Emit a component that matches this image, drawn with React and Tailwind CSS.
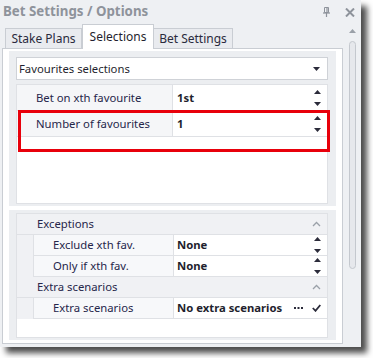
import React from 'react';

const font = { fontFamily: '"Noto Sans", "Open Sans", sans-serif' };

const Spin = () => (
  <div className="flex flex-col items-center justify-between h-[16px] w-[8px]">
    <svg width="7" height="4" viewBox="0 0 7 4"><path d="M0 4 L3.5 0 L7 4 Z" fill="#2b2b3a" /></svg>
    <svg width="7" height="4" viewBox="0 0 7 4"><path d="M0 0 L3.5 4 L7 0 Z" fill="#2b2b3a" /></svg>
  </div>
);

const Caret = () => (
  <svg width="9" height="6" viewBox="0 0 9 6">
    <path d="M1 5 L4.5 1.5 L8 5" fill="none" stroke="#9aa0a8" strokeWidth="1.3" />
  </svg>
);

const TopRow = ({ label, value }) => (
  <div className="flex h-[26px] border-b border-[#dfe1e5]">
    <div className="w-[156px] bg-[#f5f6f8] border-r border-[#dfe1e5] flex items-center pl-[19px] text-[#26264a]">
      {label}
    </div>
    <div className="flex-1 flex items-center justify-between pl-[4px] pr-[6px] font-bold text-[#1f1f2e]">
      <span>{value}</span>
      <Spin />
    </div>
  </div>
);

const Category = ({ label }) => (
  <div className="flex h-[21px] items-center justify-between bg-[#f0f1f4] border-b border-[#dfe1e5] pl-[20px] pr-[6px] text-[#26264a]">
    <span>{label}</span>
    <Caret />
  </div>
);

const ChildRow = ({ label, children }) => (
  <div className="flex h-[21px] bg-[#f0f1f4]">
    <div className="w-[16px]" />
    <div className="flex flex-1 border-b border-l border-[#dfe1e5] bg-white">
      <div className="w-[140px] bg-[#f7f8fa] border-r border-[#dfe1e5] flex items-center pl-[19px] text-[#26264a]">
        {label}
      </div>
      <div className="flex-1 flex items-center justify-between pl-[3px] pr-[6px] font-bold text-[#1f1f2e]">
        {children}
      </div>
    </div>
  </div>
);

export default function App() {
  return (
    <div className="w-[373px] h-[358px] bg-white text-[11.3px] leading-none" style={font}>
      <div className="relative w-[361px] h-[347px] bg-[#eef0f3] flex flex-col shadow-[6px_6px_6px_rgba(0,0,0,0.7)]">
        {/* Title bar */}
        <div className="h-[24px] flex items-center justify-between pl-[3px] pr-[6px]">
          <span className="font-bold text-[#8e939b] text-[13.3px]">Bet Settings / Options</span>
          <div className="flex items-center gap-[15px]">
            <svg width="7" height="10" viewBox="0 0 7 10">
              <path d="M1.5 0.5 H5.5 V5.5 H1.5 Z" fill="none" stroke="#8e939b" strokeWidth="1" />
              <path d="M4 1 V5" stroke="#8e939b" strokeWidth="1.2" />
              <path d="M0 6 H7" stroke="#8e939b" strokeWidth="1.2" />
              <path d="M3.5 6 V10" stroke="#8e939b" strokeWidth="1.2" />
            </svg>
            <svg width="10" height="9" viewBox="0 0 10 9">
              <path d="M1 0.5 L9 8.5 M9 0.5 L1 8.5" stroke="#8e939b" strokeWidth="2" />
            </svg>
          </div>
        </div>

        <div className="flex flex-1">
          {/* Left: tabs + panel */}
          <div className="flex flex-col w-[343px] pl-[2px] pb-[3px]">
            <div className="flex items-end h-[24px] pl-[3px] relative z-10 text-[12px]">
              <div className="h-[20px] w-[77px] flex items-center justify-center pt-[1px] bg-[#e9ebef] border border-b-0 border-[#c9cdd3] text-[#2a2a3c]">
                Stake Plans
              </div>
              <div className="h-[25px] w-[72px] -mb-[1px] flex items-center justify-center bg-white border border-b-0 border-[#c9cdd3] text-[#1f1f2e]">
                Selections
              </div>
              <div className="h-[20px] w-[79px] flex items-center justify-center pt-[1px] bg-[#e9ebef] border border-b-0 border-l-0 border-[#c9cdd3] text-[#2a2a3c]">
                Bet Settings
              </div>
            </div>
            <div className="flex-1 bg-white border border-[#c9cdd3] px-[6px] pt-[2px] pb-[3px] flex flex-col">
              {/* Upper box */}
              <div className="h-[155px] bg-[#eceef1] pl-[7px] pr-[8px] pt-[6px] pb-[2px] flex flex-col">
                <div className="h-[23px] bg-white border border-[#cfd2d7] flex items-center justify-between pl-[2px] pr-[7px] text-[#1f1f2e]">
                  <span>Favourites selections</span>
                  <svg width="7" height="4" viewBox="0 0 7 4"><path d="M0 0 L3.5 4 L7 0 Z" fill="#2b2b3a" /></svg>
                </div>
                <div className="mt-[4px] flex-1 bg-white border border-[#dfe1e5]">
                  <TopRow label="Bet on xth favourite" value="1st" />
                  <TopRow label="Number of favourites" value="1" />
                </div>
              </div>
              <div className="h-[4px]" />
              {/* Lower box */}
              <div className="flex-1 bg-[#eceef1] pl-[7px] pr-[8px] pt-[3px] pb-[2px] flex flex-col">
                <div className="flex-1 bg-white border border-[#dfe1e5]">
                  <Category label="Exceptions" />
                  <ChildRow label="Exclude xth fav.">
                    <span>None</span>
                    <Spin />
                  </ChildRow>
                  <ChildRow label="Only if xth fav.">
                    <span>None</span>
                    <Spin />
                  </ChildRow>
                  <Category label="Extra scenarios" />
                  <ChildRow label="Extra scenarios">
                    <span>No extra scenarios</span>
                    <div className="flex items-center gap-[9px]">
                      <svg width="9" height="3" viewBox="0 0 9 3">
                        <rect x="0" y="0" width="2" height="2" fill="#2b2b3a" />
                        <rect x="3.5" y="0" width="2" height="2" fill="#2b2b3a" />
                        <rect x="7" y="0" width="2" height="2" fill="#2b2b3a" />
                      </svg>
                      <svg width="9" height="8" viewBox="0 0 9 8">
                        <path d="M0.8 4 L3.5 6.8 L8.3 1" fill="none" stroke="#2b2b3a" strokeWidth="1.8" />
                      </svg>
                    </div>
                  </ChildRow>
                </div>
              </div>
            </div>
          </div>

          {/* Scrollbar */}
          <div className="flex-1 flex flex-col items-center pt-[5px] pb-[78px]">
            <svg width="7" height="4" viewBox="0 0 7 4"><path d="M0 4 L3.5 0 L7 4 Z" fill="#9aa0a8" /></svg>
            <div className="mt-[8px] w-[7px] flex-1 rounded-full bg-[#e6e8ec] border border-[#c4c8ce]" />
          </div>
        </div>

        {/* Highlight annotation */}
        <div className="absolute left-[18px] top-[110px] w-[312px] h-[42px] border-[3px] border-[#e8000b]" />
      </div>
    </div>
  );
}
